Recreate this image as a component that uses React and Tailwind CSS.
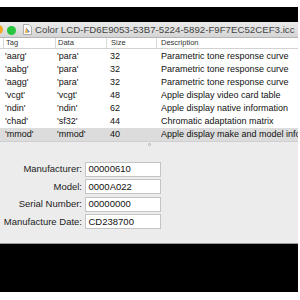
import React from "react";

const rows = [
  { tag: "'aarg'", data: "'para'", size: "32", desc: "Parametric tone response curve" },
  { tag: "'aabg'", data: "'para'", size: "32", desc: "Parametric tone response curve" },
  { tag: "'aagg'", data: "'para'", size: "32", desc: "Parametric tone response curve" },
  { tag: "'vcgt'", data: "'vcgt'", size: "48", desc: "Apple display video card table" },
  { tag: "'ndin'", data: "'ndin'", size: "62", desc: "Apple display native information" },
  { tag: "'chad'", data: "'sf32'", size: "44", desc: "Chromatic adaptation matrix" },
  { tag: "'mmod'", data: "'mmod'", size: "40", desc: "Apple display make and model information", selected: true },
];

const fields = [
  { label: "Manufacturer:", value: "00000610" },
  { label: "Model:", value: "0000A022" },
  { label: "Serial Number:", value: "00000000" },
  { label: "Manufacture Date:", value: "CD238700" },
];

const DocIcon = () => (
  <svg width="9" height="11" viewBox="0 0 9 11" className="shrink-0">
    <path d="M0.5 0.5h5.5l2.5 2.5v7.5h-8z" fill="#fff" stroke="#9a9a9a" strokeWidth="0.8" />
    <path d="M2 9l1.2-5.5 3.6 4.5z" fill="#e84a8a" />
    <path d="M3.2 3.5l3.6 4.5-2 0.6z" fill="#4aa0e8" />
    <path d="M2 9l2.8-0.4-1.6-5.1z" fill="#f2c230" />
  </svg>
);

const App = () => {
  return (
    <div
      className="w-[300px] h-[300px] bg-white overflow-hidden flex flex-col"
      style={{ fontFamily: "'Liberation Sans', Arial, sans-serif" }}
    >
      <div className="h-[7px] shrink-0" />
      <div className="w-[298px] bg-black pt-[15px] pb-[48px] flex flex-col">
        {/* window */}
        <div className="flex flex-col bg-[#ececec] border-b border-[#9c9c9c]">
          {/* title bar */}
          <div className="h-[16px] flex items-center bg-gradient-to-b from-[#ebebeb] to-[#d5d5d5] border-b border-[#b4b4b4] relative">
            <div className="absolute left-[-6px] top-[3px] w-[9px] h-[9px] rounded-full bg-[#f5a623]" />
            <div className="absolute left-[7px] top-[3.5px] w-[9px] h-[9px] rounded-full bg-[#28c63f]" />
            <div className="ml-[23px] flex items-center">
              <DocIcon />
              <span className="ml-[3px] text-[9.7px] leading-none text-[#444] whitespace-nowrap">
                Color LCD-FD6E9053-53B7-5224-5892-F9F7EC52CEF3.icc
              </span>
            </div>
          </div>

          {/* table */}
          <div className="bg-white">
            <div className="h-[11px] flex text-[7.5px] leading-none text-[#333] border-b border-[#d2d2d2]">
              <div className="w-[3px]" />
              <div className="w-[52px] border-l border-[#dadada] pl-[2px] flex items-center">Tag</div>
              <div className="w-[51px] border-l border-[#dadada] pl-[2px] flex items-center">Data</div>
              <div className="w-[50px] border-l border-[#dadada] pl-[4px] flex items-center">Size</div>
              <div className="flex-1 border-l border-[#dadada] pl-[4px] flex items-center">Description</div>
            </div>
            <div className="pt-[1px]">
              {rows.map((r) => (
                <div
                  key={r.tag}
                  className={`h-[13px] flex items-center text-[9px] leading-none text-[#111] whitespace-nowrap ${
                    r.selected ? "bg-[#dcdcdc]" : ""
                  }`}
                >
                  <div className="w-[57px] pl-[5px]">{r.tag}</div>
                  <div className="w-[53px]">{r.data}</div>
                  <div className="w-[51px]">{r.size}</div>
                  <div className="flex-1 overflow-hidden">{r.desc}</div>
                </div>
              ))}
            </div>
          </div>

          {/* split divider */}
          <div className="h-[4px] border-t border-[#cfcfcf] flex justify-center relative">
            <div className="absolute top-[0.5px] left-[148px] w-[3px] h-[3px] rounded-full border border-[#b0b0b0] bg-[#e4e4e4]" />
          </div>

          {/* form */}
          <div className="h-[98px] pt-[16.5px] flex flex-col gap-[2.5px]">
            {fields.map((f) => (
              <div key={f.label} className="flex items-center h-[15px]">
                <div className="w-[82px] text-right text-[9.5px] leading-none text-[#222] whitespace-nowrap">
                  {f.label}
                </div>
                <div className="ml-[3px] w-[76px] h-[15px] bg-white border border-[#c4c4c4] flex items-center pl-[2.5px] text-[9.5px] leading-none text-[#111]">
                  {f.value}
                </div>
              </div>
            ))}
          </div>
        </div>
      </div>
    </div>
  );
};

export default App;
